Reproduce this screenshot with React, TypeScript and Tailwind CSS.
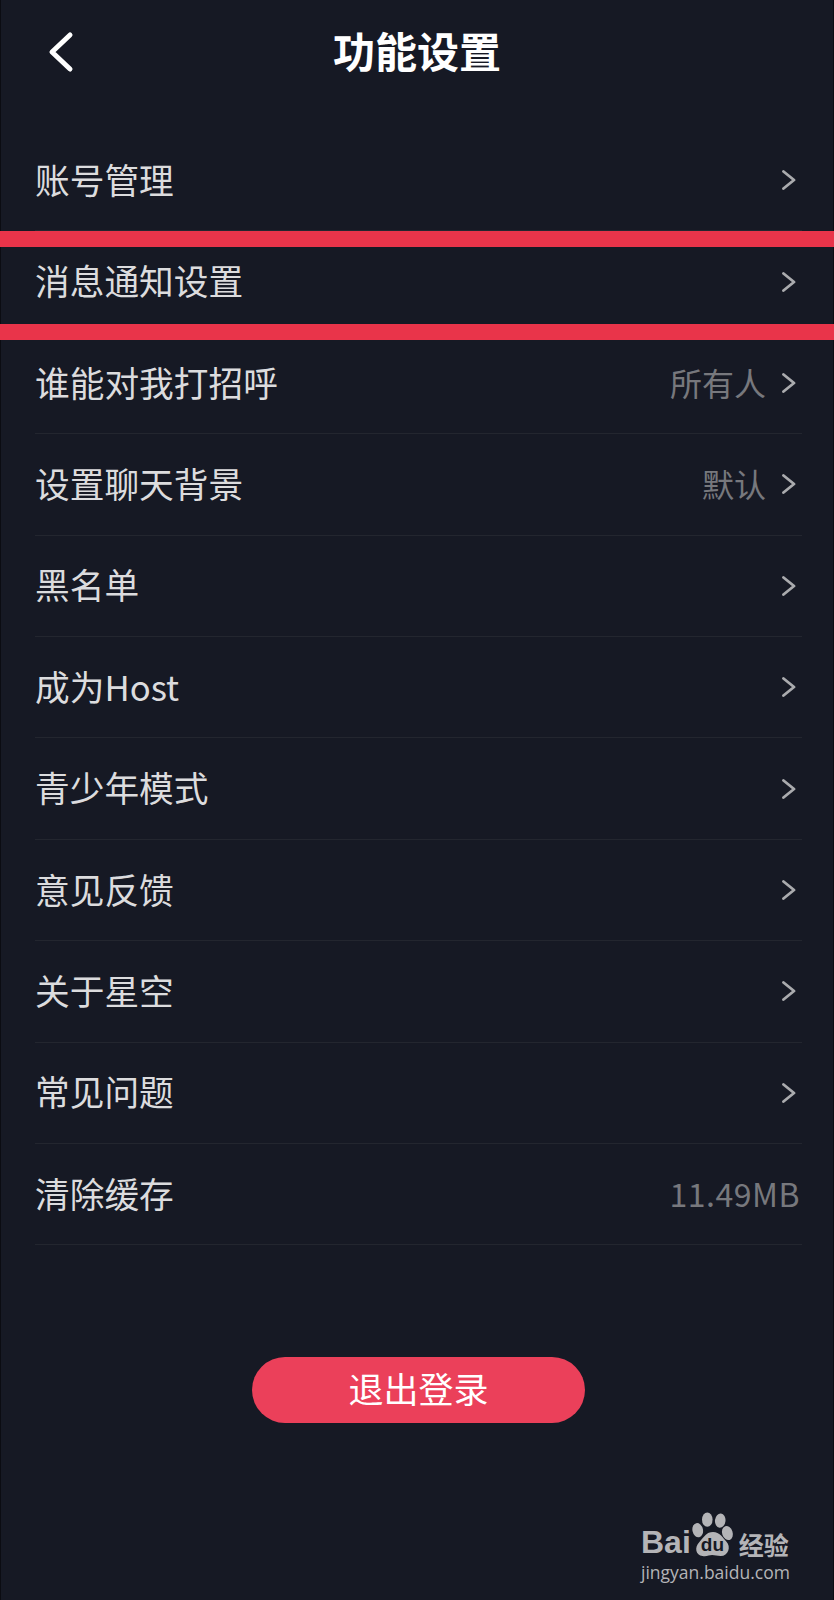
const rows = [
  { label: "账号管理" },
  { label: "消息通知设置" },
  { label: "谁能对我打招呼", value: "所有人" },
  { label: "设置聊天背景", value: "默认" },
  { label: "黑名单" },
  { label: "成为Host" },
  { label: "青少年模式" },
  { label: "意见反馈" },
  { label: "关于星空" },
  { label: "常见问题" },
  { label: "清除缓存", value: "11.49MB", noArrow: true },
];

const Chevron = () => (
  <svg width="14" height="20" viewBox="0 0 14 20" fill="none" className="ml-[16px] mr-[6px] shrink-0">
    <path d="M1.5 1.5L12 10L1.5 18.5" stroke="#aaabae" strokeWidth="2.8" strokeLinecap="round" strokeLinejoin="round" />
  </svg>
);

const Watermark = () => (
  <div className="mt-[86px] ml-[641px] w-[150px] text-[#b4b4b7]">
    <div className="flex h-[50px] items-end">
      <span className="text-[32px] leading-[33px] font-bold font-['Liberation_Sans',sans-serif]">Bai</span>
      <div className="relative h-[50px] w-[46px] shrink-0">
        <svg width="46" height="50" viewBox="0 0 48 50" fill="currentColor">
          <ellipse cx="17" cy="10" rx="5.5" ry="7.5" />
          <ellipse cx="30.5" cy="11" rx="5.5" ry="7.5" transform="rotate(6 30.5 11)" />
          <ellipse cx="7" cy="21" rx="5.5" ry="7.5" transform="rotate(-12 7 21)" />
          <ellipse cx="38" cy="24" rx="5.5" ry="7.5" transform="rotate(-18 38 24)" />
          <path d="M23 23C30 23 33 29 37 33C42 38 39 48 31 48C27 48 25 47 22 47C19 47 16 49 12 48C5 47 3 39 9 33C14 28 16 23 23 23Z" />
        </svg>
        <span className="absolute left-[10px] top-[25px] text-[19px] leading-[22px] font-bold text-[#161924] font-['Liberation_Sans',sans-serif]">du</span>
      </div>
      <span className="ml-[2px] text-[25px] leading-[30px] font-bold whitespace-nowrap">经验</span>
    </div>
    <div className="mt-[2px] text-[17.5px] leading-[22px] whitespace-nowrap font-['Open_Sans',sans-serif]">jingyan.baidu.com</div>
  </div>
);

export default function App() {
  return (
    <div className="relative h-[1600px] w-[834px] overflow-hidden bg-[#161924] shadow-[inset_1px_0_0_#0b0c12,inset_-1px_0_0_#0b0c12] font-['Noto_Sans_CJK_SC',sans-serif]">
      <header className="grid h-[104px] grid-cols-[1fr_auto_1fr] items-center pb-[4px]">
        <svg width="28" height="42" viewBox="0 0 28 42" fill="none" className="ml-[47px] mt-[3px]">
          <path d="M23 4L5 21L23 38" stroke="#ffffff" strokeWidth="5" strokeLinecap="round" strokeLinejoin="round" />
        </svg>
        <h1 className="text-[42px] leading-none font-bold text-white">功能设置</h1>
      </header>

      <div className="mt-[26px] ml-[35px] mr-[32px]">
        {rows.map((row) => (
          <div key={row.label} className="flex h-[101.4px] items-center justify-between border-b border-[#23262f]">
            <span className="mb-[2px] text-[34.7px] leading-none text-[#dcdcde]">{row.label}</span>
            <div className="flex items-center">
              {row.value && (
                <span className={row.noArrow ? "mr-[2px] mb-[2px] text-[32px] leading-none tracking-[0.5px] text-[#77787d]" : "mb-[2px] text-[32px] leading-none text-[#77787d]"}>
                  {row.value}
                </span>
              )}
              {!row.noArrow && <Chevron />}
            </div>
          </div>
        ))}
      </div>

      {/* annotation lines drawn over the screenshot */}
      <div className="absolute inset-x-0 top-[231px] h-[16px] bg-[#e9344a]" />
      <div className="absolute inset-x-0 top-[324px] h-[16px] bg-[#e9344a]" />

      <div className="mt-[112px] flex justify-center pl-[3px]">
        <button className="h-[66px] w-[333px] rounded-full bg-[#eb405a] pb-[6px] text-[35px] leading-none text-white">退出登录</button>
      </div>

      <Watermark />
    </div>
  );
}
